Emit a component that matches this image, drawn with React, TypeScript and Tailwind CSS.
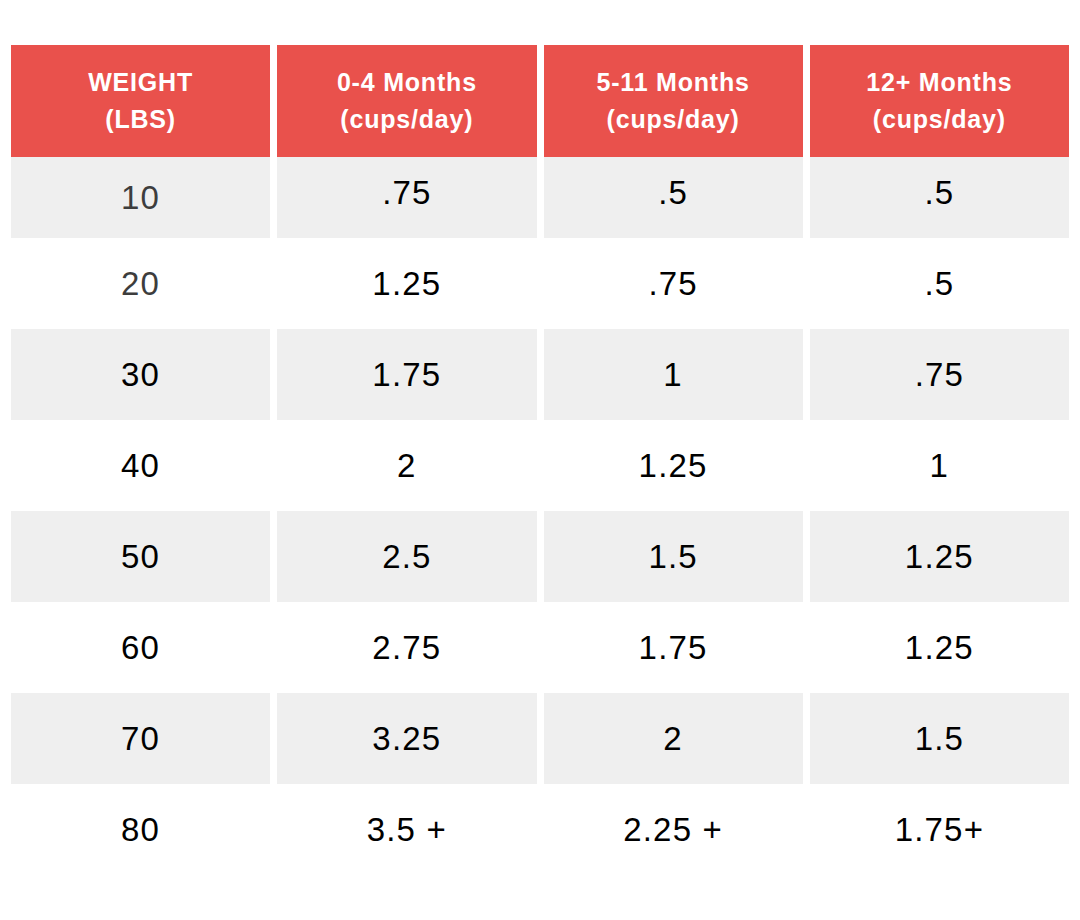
import React from "react";

type Row = {
  weight: string;
  young: string;
  mid: string;
  adult: string;
  muted?: boolean;
};

const rows: Row[] = [
  { weight: "10", young: ".75", mid: ".5", adult: ".5", muted: true },
  { weight: "20", young: "1.25", mid: ".75", adult: ".5", muted: true },
  { weight: "30", young: "1.75", mid: "1", adult: ".75" },
  { weight: "40", young: "2", mid: "1.25", adult: "1" },
  { weight: "50", young: "2.5", mid: "1.5", adult: "1.25" },
  { weight: "60", young: "2.75", mid: "1.75", adult: "1.25" },
  { weight: "70", young: "3.25", mid: "2", adult: "1.5" },
  { weight: "80", young: "3.5 +", mid: "2.25 +", adult: "1.75+" },
];

const headers = [
  ["WEIGHT", "(LBS)"],
  ["0-4 Months", "(cups/day)"],
  ["5-11 Months", "(cups/day)"],
  ["12+ Months", "(cups/day)"],
];

const App = () => {
  return (
    <div
      className="w-[1080px] h-[920px] bg-white pt-[45px] px-[11px]"
      style={{ fontFamily: '"Liberation Sans", Arial, sans-serif' }}
    >
      <div className="grid grid-cols-4 gap-x-[7px]">
        {headers.map((h) => (
          <div
            key={h[0]}
            className="h-[112px] bg-[#e9514c] text-white font-bold text-[25px] leading-[37px] tracking-[0.8px] flex flex-col items-center justify-center"
          >
            <span>{h[0]}</span>
            <span>{h[1]}</span>
          </div>
        ))}

        {rows.map((row, i) => {
          const bg = i % 2 === 0 ? "bg-[#efefef]" : "bg-white";
          const height = i === 0 ? "h-[81px]" : "h-[91px]";
          const cells = [row.weight, row.young, row.mid, row.adult];
          return cells.map((value, j) => (
            <div
              key={`${row.weight}-${j}`}
              className={`${bg} ${height} ${i === 0 && j > 0 ? "pb-[10px]" : ""} flex items-center justify-center text-[33px] tracking-[1.2px] ${
                j === 0 && row.muted ? "text-[#3d3d3d]" : "text-black"
              }`}
            >
              {value}
            </div>
          ));
        })}
      </div>
    </div>
  );
};

export default App;
